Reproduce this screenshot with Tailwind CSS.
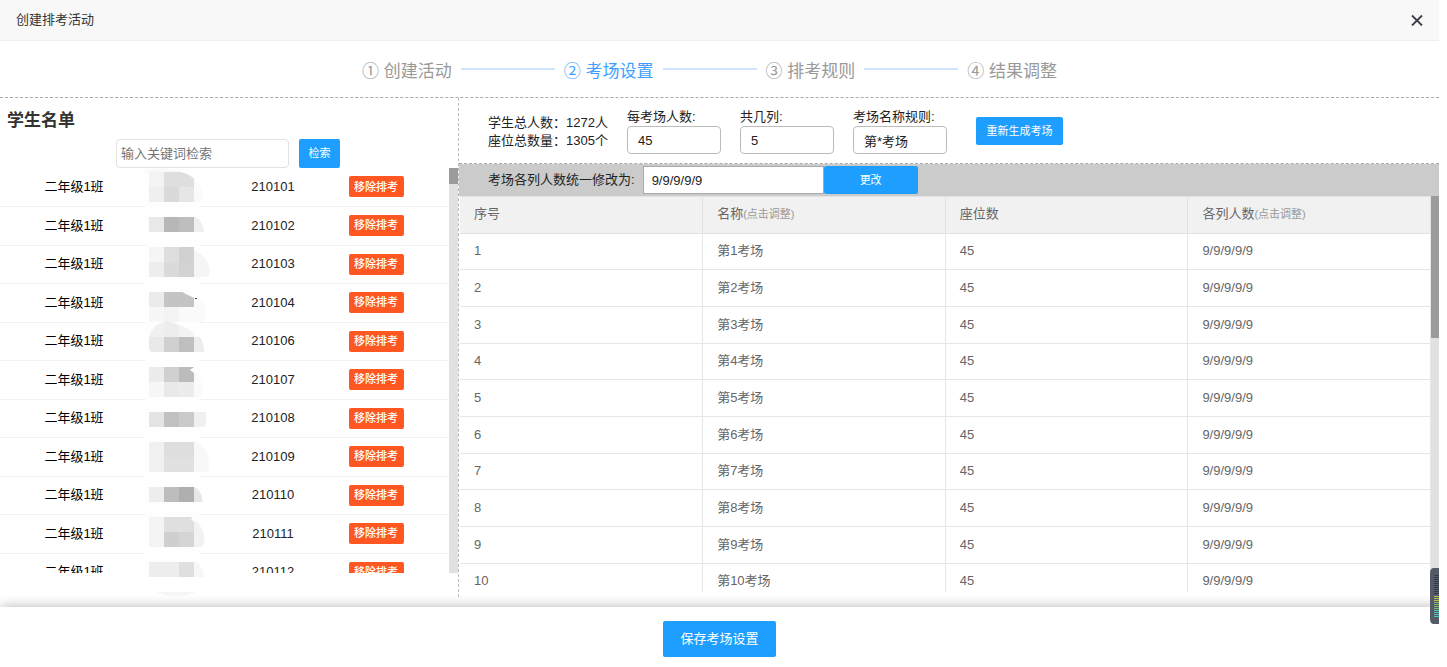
<!DOCTYPE html>
<html lang="zh-CN">
<head>
<meta charset="utf-8">
<title>创建排考活动</title>
<script src="https://cdn.jsdelivr.net/npm/@tailwindcss/browser@4"></script>
</head>
<body class="bg-white font-['Liberation_Sans','Noto_Sans_CJK_SC',sans-serif] text-[13px] text-[#222]">
<div class="relative mr-2 flex h-screen flex-col">
  <header class="flex h-[41px] shrink-0 items-center justify-between border-b border-[#eee] bg-[#f8f8f8] px-4">
    <h1 class="text-[#333]">创建排考活动</h1>
    <button type="button" aria-label="关闭" class="flex h-5 w-3 items-center justify-center">
      <svg class="size-3 shrink-0" viewBox="0 0 12 12" fill="none" stroke="#3d3d4a" stroke-width="1.8"><path d="M1 1.5 11 11.5M11 1.5 1 11.5"/></svg>
    </button>
  </header>

  <nav class="flex h-[57px] shrink-0 items-center justify-center gap-[9px] border-b border-dashed border-[#aaa] pr-5 text-[17px] text-[#999]">
    <span class="pt-[5px]">① 创建活动</span>
    <i class="h-[2px] w-[94px] bg-[#cfe5ff]"></i>
    <span class="pt-[5px] text-[#409eff]" aria-current="step">② 考场设置</span>
    <i class="h-[2px] w-[94px] bg-[#cfe5ff]"></i>
    <span class="pt-[5px]">③ 排考规则</span>
    <i class="h-[2px] w-[94px] bg-[#cfe5ff]"></i>
    <span class="pt-[5px]">④ 结果调整</span>
  </nav>

  <main class="flex min-h-0 flex-1">
    <section class="mb-[10px] flex w-[459px] shrink-0 flex-col border-r border-dashed border-[#bbb] pb-6">
      <h2 class="mt-[10px] h-[31px] pl-[7px] text-[17px] leading-[26px] font-bold text-[#333]">学生名单</h2>
      <form class="flex h-[29px] shrink-0 justify-center gap-[10px] pr-[2px]">
        <input type="text" aria-label="关键词" placeholder="输入关键词检索" class="h-[29px] w-[173px] rounded-[4px] border border-[#e2e2e2] px-1 placeholder:text-[#757575]">
        <button type="button" class="h-[29px] w-[41px] rounded-[2px] bg-[#1e9fff] text-[11px] text-white">检索</button>
      </form>
      <div class="relative flex min-h-0 flex-1">
        <div class="min-w-0 flex-1 overflow-hidden">
          <table class="w-full table-fixed border-collapse text-center">
            <colgroup><col class="w-[148px]"><col class="w-[75px]"><col class="w-[100px]"><col class="w-[106px]"><col></colgroup>
            <tbody id="students"></tbody>
          </table>
        </div>
        <div class="w-[9px] bg-[#e1e1e1]"><div class="h-4 bg-[#9b9b9b]"></div></div>
        <!-- masked student names -->
        <svg class="absolute top-0 left-[140px] h-[430px] w-[75px]" viewBox="140 168 75 430" aria-hidden="true">
          <path fill="#fefefe" d="M145 168H200V576H145z"/>
          <path fill="#f9f9f9" d="M143 172Q160 165 182 172z"/>
          <path fill="#f3f3f3" d="M149 172h15v15h-15z"/><path fill="#efefef" d="M149 187h15v15h-15z"/>
          <path fill="#dedede" d="M164 172h16Q190 174 194 179v8h-30z"/><path fill="#dadada" d="M164 187h15v15h-15z"/><path fill="#e6e6e6" d="M179 187h15v15h-15z"/>
          <path fill="#fafafa" d="M194 179Q206 190 201 202h-7z"/>

          <path fill="#e8e8e8" d="M149 217h15v15h-15z"/><path fill="#b7b7b7" d="M164 217h15v15h-15z"/><path fill="#bebebe" d="M179 217h15v15h-15z"/><path fill="#efefef" d="M194 217Q202 218 204 232H194z"/>

          <path fill="#f5f5f5" d="M149 247h15v15h-15z"/><path fill="#dedede" d="M164 247h15v15h-15z"/><path fill="#d1d1d1" d="M179 247h15v15h-15z"/>
          <path fill="#ededed" d="M149 262h15v15h-15z"/><path fill="#dadada" d="M164 262h15v15h-15z"/><path fill="#d2d2d2" d="M179 262h15v15h-15z"/><path fill="#f5f5f5" d="M194 250Q212 259 209 277H194z"/>

          <path fill="#ebebeb" d="M149 292h15v15h-15z"/><path fill="#c4c4c4" d="M164 292h18L194 298v9h-30z"/><path fill="#444" d="M195 298h2v1h-2z"/>
          <path fill="#f7f7f7" d="M149 307h15v15h-15z"/><path fill="#f3f3f3" d="M164 307h15v15h-15z"/><path fill="#fafafa" d="M179 307h27q0 10-4 15h-23z"/><path fill="#fafafa" d="M194 299q11 3 11 8h-11z"/>
          <path fill="#f0f0f0" d="M149 337q4-13 15-15v15z"/><path fill="#ededed" d="M164 322q10-1 15 4v11h-15z"/><path fill="#f3f3f3" d="M179 325q10 3 15 9v3h-15z"/>
          <path fill="#e9e9e9" d="M149 337h15v15h-13l-2-3z"/><path fill="#d0d0d0" d="M164 337h15v15h-15z"/><path fill="#bfbfbf" d="M179 337h15v15h-15z"/><path fill="#ededed" d="M194 337h6Q204 342 204 352H194z"/>

          <path fill="#ececec" d="M149 367h15v15h-15z"/><path fill="#d0d0d0" d="M164 367h15v15h-15z"/><path fill="#bcbcbc" d="M179 367h15l-4 3 4 3v9h-15z"/>
          <path fill="#f7f7f7" d="M149 382h15v15h-15z"/><path fill="#e9e9e9" d="M164 382h15v15h-15z"/><path fill="#ececec" d="M179 382h15v15h-15z"/><path fill="#fafafa" d="M194 372Q205 380 201 397h-7z"/>

          <path fill="#e4e4e4" d="M149 412h15v15h-15z"/><path fill="#c1c1c1" d="M164 412h15v15h-15z"/><path fill="#cacaca" d="M179 412h15v15h-15z"/><path fill="#f0f0f0" d="M194 412h12q1 8-1 15h-11z"/>

          <path fill="#f1f1f1" d="M149 442h15v30h-15z"/><path fill="#dedede" d="M164 442h30v15h-30z"/><path fill="#e1e1e1" d="M164 457h30v15h-30z"/><path fill="#f8f8f8" d="M194 442Q211 446 209 472H194z"/>

          <path fill="#ededed" d="M149 487h15v15h-15z"/><path fill="#bdbdbd" d="M164 487h15v15h-15z"/><path fill="#afafaf" d="M179 487h15v15h-15z"/><path fill="#e7e7e7" d="M194 487Q201 489 203 502H194z"/>

          <path fill="#f4f4f4" d="M149 517h15v30h-15z"/><path fill="#dfdfdf" d="M164 517h29l-2 2 3 3v10h-30z"/><path fill="#cfcfcf" d="M164 532h15v15h-15z"/><path fill="#d5d5d5" d="M179 532h15v15h-15z"/><path fill="#f2f2f2" d="M194 520Q208 530 203 547H194z"/>

          <path fill="#ededed" d="M149 562h30v15h-30z"/><path fill="#dfdfdf" d="M179 562h15v15h-15z"/><path fill="#f7f7f7" d="M194 562Q202 563 204 577H194z"/>
          <path fill="#f5f5f5" d="M156 592h40q-20 8-40 0z"/>
        </svg>
      </div>
    </section>

    <section class="mb-[15px] flex min-w-0 flex-1 flex-col">
      <form class="flex h-[66px] shrink-0 border-b border-dashed border-[#aaa] pt-[10px] pl-[29px]">
        <div class="mt-[6px] mr-[19px] leading-[18px] whitespace-nowrap">
          <p>学生总人数：1272人</p>
          <p>座位总数量：1305个</p>
        </div>
        <div class="flex gap-[19px]">
          <label class="block w-[94px] leading-[18px]">每考场人数:<input type="text" value="45" class="block h-[28px] w-full rounded-[4px] border border-[#bbb] px-[10px]"></label>
          <label class="block w-[94px] leading-[18px]">共几列:<input type="text" value="5" class="block h-[28px] w-full rounded-[4px] border border-[#bbb] px-[10px]"></label>
          <label class="block w-[94px] leading-[18px]">考场名称规则:<input type="text" value="第*考场" class="block h-[28px] w-full rounded-[4px] border border-[#bbb] px-[10px]"></label>
        </div>
        <button type="button" class="mt-[9px] ml-[29px] h-[28px] w-[87px] rounded-[2px] bg-[#1e9fff] text-[11px] text-white">重新生成考场</button>
      </form>
      <form class="flex h-[32px] shrink-0 items-center bg-[#cbcbcb] pl-[29px]">
        <label for="all" class="mr-2">考场各列人数统一修改为:</label>
        <input id="all" type="text" value="9/9/9/9/9" class="h-[28px] w-[181px] border border-[#aaa] bg-white px-2">
        <button type="button" class="h-[28px] w-[94px] rounded-[2px] bg-[#1e9fff] text-[11px] text-white">更改</button>
      </form>
      <div class="flex min-h-0 flex-1 pl-px">
        <div class="min-w-0 flex-1 overflow-hidden">
          <table class="w-full table-fixed border-collapse text-left text-[#666]">
            <thead>
              <tr class="h-[37px] border-y border-[#e2e2e2] bg-[#f1f1f1]">
                <th class="border-r border-[#e2e2e2] px-[14px] pb-[2px] font-normal">序号</th>
                <th class="border-r border-[#e2e2e2] px-[14px] pb-[2px] font-normal">名称<small class="text-[11px] text-[#999]">(点击调整)</small></th>
                <th class="border-r border-[#e2e2e2] px-[14px] pb-[2px] font-normal">座位数</th>
                <th class="border-r border-[#e2e2e2] px-[14px] pb-[2px] font-normal">各列人数<small class="text-[11px] text-[#999]">(点击调整)</small></th>
              </tr>
            </thead>
            <tbody id="rooms"></tbody>
          </table>
        </div>
        <div class="w-2 bg-[#e1e1e1]"><div class="h-[142px] bg-[#9b9b9b]"></div></div>
      </div>
    </section>
  </main>

  <footer class="flex h-[60px] shrink-0 items-center justify-center bg-white pt-[4px] shadow-[0_0_12px_rgba(0,0,0,0.3)] [clip-path:inset(-12px_0_0_0)]">
    <button type="button" class="h-[36px] w-[113px] rounded-[2px] bg-[#1e9fff] text-white">保存考场设置</button>
  </footer>

  <!-- docked meter on the window edge -->
  <svg class="absolute right-0 bottom-[43px] h-14 w-[9px]" viewBox="0 0 9 56" aria-hidden="true">
    <path fill="#555a68" d="M9 0H4Q0 0 0 5V51q0 5 4 5h5z"/>
    <path stroke="#343946" stroke-width="5" stroke-dasharray="1 1" d="M6.5 7V27"/>
    <path stroke="#b5c04c" stroke-width="5" stroke-dasharray="1 1" d="M6.5 28V34"/>
    <path stroke="#7cb865" stroke-width="5" stroke-dasharray="1 1" d="M6.5 34V42"/>
    <path stroke="#4fc9b4" stroke-width="5" stroke-dasharray="1 1" d="M6.5 42V50"/>
  </svg>
</div>
<script>
  const ids = [210101, 210102, 210103, 210104, 210106, 210107, 210108, 210109, 210110, 210111, 210112];
  document.getElementById('students').innerHTML = ids.map(id => `
    <tr class="h-[39px] border-b border-[#f2f2f2] odd:h-[38px]">
      <td class="text-black">二年级1班</td><td></td><td>${id}</td>
      <td><button type="button" class="block mx-auto h-[21px] w-[55px] rounded-[2px] bg-[#ff5722] text-[11px] font-medium text-white">移除排考</button></td><td></td>
    </tr>`).join('');
  document.getElementById('rooms').innerHTML = Array.from({length: 11}, (_, i) => `
    <tr class="h-[37px] border-b border-[#e6e6e6] nth-[3n+1]:h-[36px]">
      <td class="border-r border-[#e6e6e6] px-[14px] pb-px">${i + 1}</td>
      <td class="border-r border-[#e6e6e6] px-[14px] pb-px">第${i + 1}考场</td>
      <td class="border-r border-[#e6e6e6] px-[14px] pb-px">45</td>
      <td class="border-r border-[#e6e6e6] px-[14px] pb-px">9/9/9/9/9</td>
    </tr>`).join('');
</script>
</body>
</html>
